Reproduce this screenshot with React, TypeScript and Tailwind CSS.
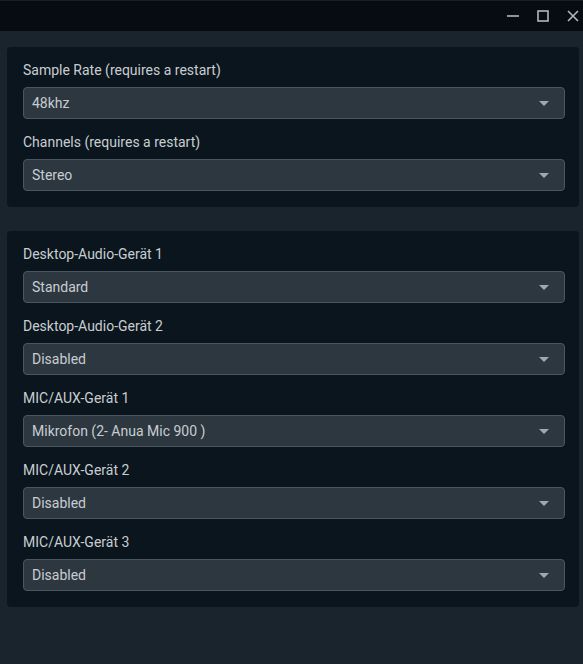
import React from "react";

type Field = { label: string; value: string };

const groups: Field[][] = [
  [
    { label: "Sample Rate (requires a restart)", value: "48khz" },
    { label: "Channels (requires a restart)", value: "Stereo" },
  ],
  [
    { label: "Desktop-Audio-Gerät 1", value: "Standard" },
    { label: "Desktop-Audio-Gerät 2", value: "Disabled" },
    { label: "MIC/AUX-Gerät 1", value: "Mikrofon (2- Anua Mic 900 )" },
    { label: "MIC/AUX-Gerät 2", value: "Disabled" },
    { label: "MIC/AUX-Gerät 3", value: "Disabled" },
  ],
];

const SelectRow = ({ label, value, first }: Field & { first: boolean }) => (
  <div className={first ? "" : "mt-[13px]"}>
    <div className="h-5 leading-5 text-[14px] text-[#c9cdd1]">{label}</div>
    <div className="mt-[7px] h-8 flex items-center justify-between rounded-[4px] border border-[#4b565f] bg-[#2c3740] pl-[8px] pr-[15px]">
      <span className="text-[14px] text-[#c9cdd1]">{value}</span>
      <svg width="10" height="5" viewBox="0 0 10 5" className="mt-[1px]">
        <path d="M0 0 L10 0 L5 5 Z" fill="#a3a8ac" />
      </svg>
    </div>
  </div>
);

const App = () => {
  return (
    <div
      className="w-[583px] h-[664px] bg-[#19242c] overflow-hidden"
      style={{ fontFamily: "Roboto, 'Liberation Sans', sans-serif" }}
    >
      {/* title bar */}
      <div className="h-[31px] bg-[#060c12] border-t border-[#172028] flex items-center justify-end">
        <svg width="14" height="14" viewBox="0 0 14 14" className="mr-[16px]">
          <path d="M1 7 H13" stroke="#b3b7bb" strokeWidth="1.6" />
        </svg>
        <svg width="14" height="14" viewBox="0 0 14 14" className="mr-[16px]">
          <rect x="2" y="2" width="10" height="10" fill="none" stroke="#b3b7bb" strokeWidth="1.6" />
        </svg>
        <svg width="14" height="14" viewBox="0 0 14 14" className="mr-[3px]">
          <path d="M2 2 L12 12 M12 2 L2 12" stroke="#b3b7bb" strokeWidth="1.6" />
        </svg>
      </div>

      <div className="pt-4 pl-[7px] pr-[4px] flex flex-col gap-6">
        {groups.map((fields, gi) => (
          <div key={gi} className="rounded-[4px] bg-[#0a151d] pl-4 pr-[14px] pt-[13px] pb-4">
            {fields.map((f, i) => (
              <SelectRow key={f.label} {...f} first={i === 0} />
            ))}
          </div>
        ))}
      </div>
    </div>
  );
};

export default App;
